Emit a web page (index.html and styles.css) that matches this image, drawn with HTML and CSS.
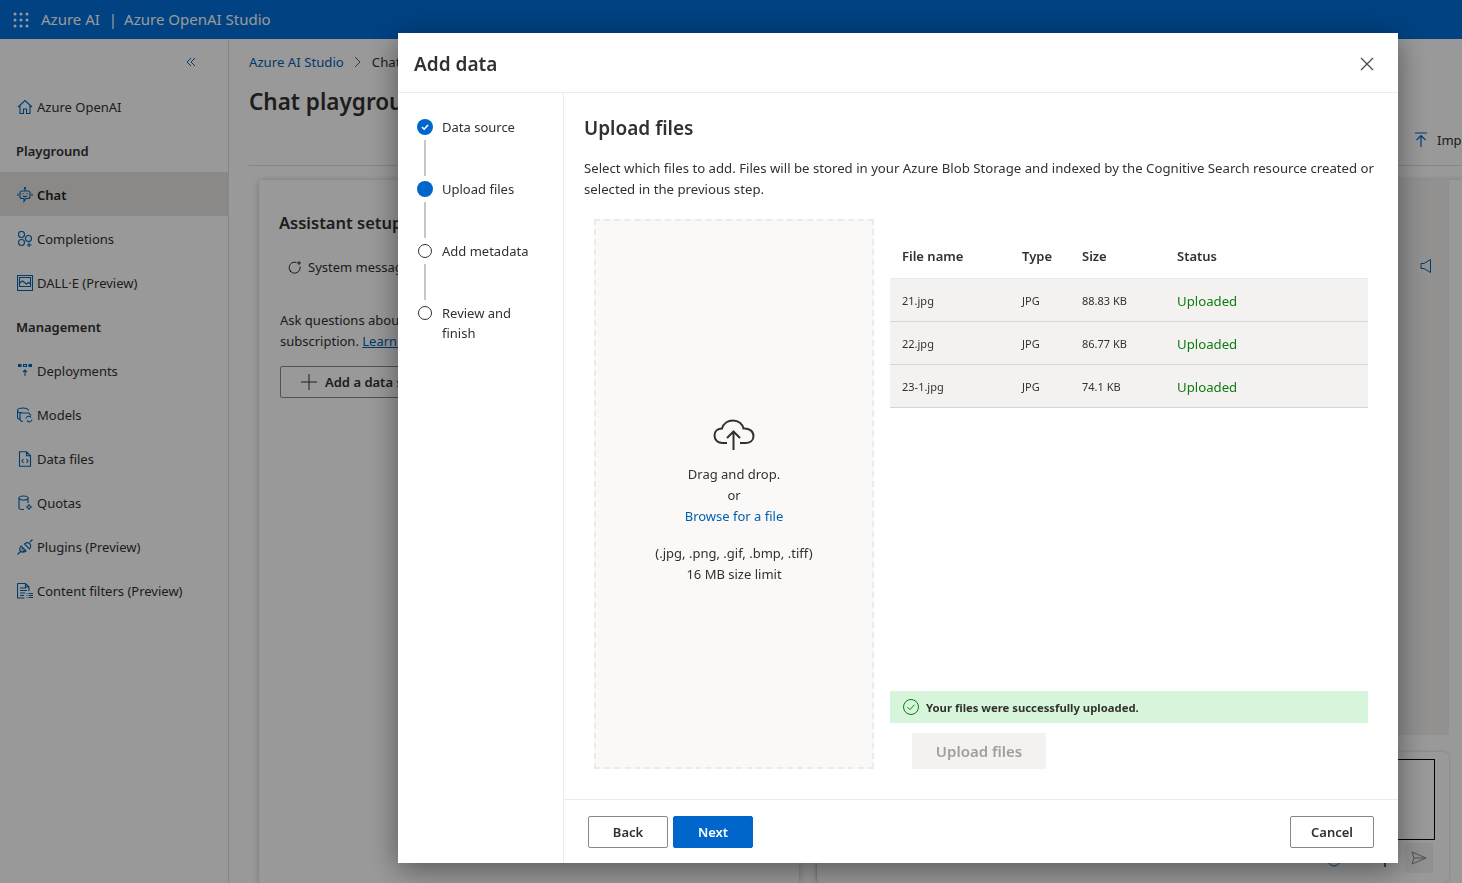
FILE: index.html
```html
<!DOCTYPE html>
<html lang="en">
<head>
<meta charset="utf-8">
<title>Azure OpenAI Studio</title>
<link rel="stylesheet" href="styles.css">
</head>
<body>
<header class="topbar">
  <svg class="waffle" width="18" height="18" viewBox="0 0 18 18" fill="currentColor"><circle cx="3" cy="3" r="1.500"/><circle cx="9" cy="3" r="1.500"/><circle cx="15" cy="3" r="1.500"/><circle cx="3" cy="9" r="1.500"/><circle cx="9" cy="9" r="1.500"/><circle cx="15" cy="9" r="1.500"/><circle cx="3" cy="15" r="1.500"/><circle cx="9" cy="15" r="1.500"/><circle cx="15" cy="15" r="1.500"/></svg>
  <span>Azure AI</span><span class="bar-sep">|</span><span>Azure OpenAI Studio</span>
</header>

<div class="shell">
  <nav class="sidebar">
    <div class="collapse">
      <svg width="10" height="10" viewBox="0 0 10 10" fill="none" stroke="currentColor"><path d="M5 1 1 5l4 4M9 1 5 5l4 4"/></svg>
    </div>
    <a class="nav-item"><svg class="nav-icon" viewBox="0 0 16 16"><path d="M1 8 8 1.500 15 8M3 6.500V14.500H6.500V10H9.500V14.500H13V6.500"/></svg>Azure OpenAI</a>
    <div class="nav-head">Playground</div>
    <a class="nav-item active"><svg class="nav-icon" viewBox="0 0 16 16"><circle cx="8" cy="1" r=".6"/><path d="M8 1.500V4M5 4h6a2 2 0 0 1 2 2v3.500a2 2 0 0 1-2 2H9l-2 3v-3H5a2 2 0 0 1-2-2V6a2 2 0 0 1 2-2zM1 6.500v2.500M15 6.500v2.500M6 9q2 1.200 4 0M6 6.300v1M10 6.300v1"/></svg>Chat</a>
    <a class="nav-item"><svg class="nav-icon" viewBox="0 0 16 16"><circle cx="4.500" cy="3.500" r="3"/><circle cx="4.500" cy="11.500" r="3"/><circle cx="11.500" cy="7.500" r="3"/><path d="M12 11.500v4.500M10 14h4.500"/></svg>Completions</a>
    <a class="nav-item"><svg class="nav-icon" viewBox="0 0 16 16"><path d="M.5 .5h15v15H.5zM2.500 2.500h11v9h-11zM2.500 8l3-2 4 3 2-1.500 2 1.500"/></svg>DALL·E (Preview)</a>
    <div class="nav-head">Management</div>
    <a class="nav-item"><svg class="nav-icon" viewBox="0 0 16 16"><path class="solid" d="M1 1h3.500v3H1zM11.500 1H15v3h-3.500z"/><path d="M6.500 1.500h3v2h-3zM8 13V7M6 9l2-2 2 2"/></svg>Deployments</a>
    <a class="nav-item"><svg class="nav-icon" viewBox="0 0 16 16"><path d="M.5 3.500v7c0 1 1 1.500 2.500 1.800M.5 3.500C.5 2 3 1 6 1s5 .8 5.500 2.500M.5 3.500C.5 5 3 6 6 6M3 5.500V12c0 1.500 1.500 2.500 3 2.500M3 5.500 6 6h6l2 2.500"/><path d="M9 11.500a2.700 2.700 0 0 1 5-1M15 12.500a2.700 2.700 0 0 1-5 1"/></svg>Models</a>
    <a class="nav-item"><svg class="nav-icon" viewBox="0 0 16 16"><path d="M2.500.8h7l4 4v10.500h-11zM9.500.8v4h4M6.500 8 5 10l1.500 2M9.500 8 11 10l-1.500 2"/></svg>Data files</a>
    <a class="nav-item"><svg class="nav-icon" viewBox="0 0 16 16"><ellipse cx="6.500" cy="3" rx="4.500" ry="2"/><path d="M2 3v10c0 1 2 1.500 5 1.500M11 3v5"/><circle cx="12" cy="12" r="1.500"/><path d="M12 9v1.200M12 13.800V15M9 12h1.200M13.800 12H15"/></svg>Quotas</a>
    <a class="nav-item"><svg class="nav-icon" viewBox="0 0 16 16"><path d="M.5 15.500 4 12M4 7l5 5c-2 1.500-4 1.500-5.500 0S2.500 9 4 7zM7.500 5l5 5c1.500-2 1.500-4 0-5.500S9.500 3.500 7.500 5zM13 3l2.500-2.500M6 9l-1.500 1.500M7.500 11 6 12.500"/></svg>Plugins (Preview)</a>
    <a class="nav-item"><svg class="nav-icon" viewBox="0 0 16 16"><path d="M.5.500h8l3.500 3.500v4M8.500.500V4H12M.5.500v14.500h7M3 5h6M3 7.500h7M3 10h5M3 12.500h4M9.500 10.500h.8M11.500 10.500h4.500M9.500 12.500h.8M11.500 12.500h4.500M9.500 14.500h.8M11.500 14.500h4.500"/></svg>Content filters (Preview)</a>
  </nav>

  <main class="content">
    <div class="crumbs"><a>Azure AI Studio</a><svg width="8" height="12" viewBox="0 0 8 12" fill="none" stroke="currentColor"><path d="m1 1 5 5-5 5"/></svg><span>Chat</span></div>
    <div class="title-row">
      <h1>Chat playground</h1>
      <div class="import"><svg width="14" height="16" viewBox="0 0 14 16" fill="none" stroke="#0066cc" stroke-width="1.200"><path d="M1 1h12M7 15V4M2.500 8 7 3.500 11.500 8"/></svg>Import</div>
    </div>
    <div class="panels">
      <section class="card setup">
        <h2>Assistant setup</h2>
        <div class="tab"><svg width="16" height="16" viewBox="0 0 16 16" fill="none" stroke="currentColor"><path d="M13 6.500a5.500 5.500 0 1 1-3.500-4M3.500 12v-2M12 1v4M10 3h4"/></svg>System message</div>
        <p>Ask questions about your data from your<br>subscription. <a>Learn more</a></p>
        <div class="add-btn"><svg width="18" height="18" viewBox="0 0 18 18" stroke="currentColor"><path d="M9 1v16M1 9h16"/></svg>Add a data source</div>
      </section>
      <section class="chat">
        <div class="chat-top"><svg width="12" height="16" viewBox="0 0 12 16" fill="none" stroke="#0067b8"><path d="M1 5.500h3l6.500-4v13l-6.500-4H1z"/></svg></div>
        <div class="chat-bottom">
          <div class="chat-input"></div>
          <div class="chat-actions">
            <svg class="act-a" width="14" height="14" viewBox="0 0 14 14" fill="none" stroke="#0067b8"><circle cx="7" cy="7" r="6"/></svg>
            <svg class="act-b" width="14" height="14" viewBox="0 0 14 14" fill="none" stroke="#323130" stroke-width="1.500"><circle cx="7" cy="5" r="4"/><path d="M7 9v5"/></svg>
            <div class="send"><svg width="16" height="14" viewBox="0 0 16 14" fill="none" stroke="currentColor"><path d="M1 1l14 6-14 6 2-6zM3 7h12"/></svg></div>
          </div>
        </div>
      </section>
    </div>
  </main>
</div>

<div class="scrim"></div>

<div class="dialog">
  <div class="dialog-head">
    <h2>Add data</h2>
    <svg width="14" height="14" viewBox="0 0 14 14" stroke="#444" stroke-width="1.200"><path d="m1 1 12 12M13 1 1 13"/></svg>
  </div>
  <div class="dialog-body">
    <ol class="steps">
      <li class="step done"><span class="dot"><svg width="10" height="10" viewBox="0 0 10 10" fill="none" stroke="#fff" stroke-width="1.600"><path d="m2 5 2.200 2.200L8 3"/></svg></span>Data source</li>
      <li class="step current"><span class="dot"></span>Upload files</li>
      <li class="step"><span class="dot"></span>Add metadata</li>
      <li class="step last"><span class="dot"></span>Review and<br>finish</li>
    </ol>
    <div class="pane">
      <div class="pane-main">
        <h3>Upload files</h3>
        <p class="lead">Select which files to add. Files will be stored in your Azure Blob Storage and indexed by the Cognitive Search resource created or selected in the previous step.</p>
        <div class="upload">
          <div class="drop">
            <svg class="cloud" width="42" height="32" viewBox="0 0 42 32" fill="none" stroke="#323130" stroke-width="2"><path d="M14 24H9.500C5 24 1.500 21 1.500 16.500S5 9.500 9 9.500C10.500 4.500 15 1.500 20 1.500c5.500 0 9.500 3.500 10.500 8 5 -.5 10 2.500 10 7.500 0 4.500-3.500 7-8 7H27"/><path d="M20.500 31V13M14 19l6.500-6.500L27 19"/></svg>
            <div>Drag and drop.</div>
            <div>or</div>
            <a>Browse for a file</a>
            <div class="types">(.jpg, .png, .gif, .bmp, .tiff)</div>
            <div>16 MB size limit</div>
          </div>
          <div class="files">
            <div class="file-table">
              <div class="file-row file-head"><span>File name</span><span>Type</span><span>Size</span><span>Status</span></div>
              <div class="file-row"><span>21.jpg</span><span>JPG</span><span>88.83 KB</span><span class="ok">Uploaded</span></div>
              <div class="file-row"><span>22.jpg</span><span>JPG</span><span>86.77 KB</span><span class="ok">Uploaded</span></div>
              <div class="file-row"><span>23-1.jpg</span><span>JPG</span><span>74.1 KB</span><span class="ok">Uploaded</span></div>
            </div>
            <div class="notice"><svg width="18" height="18" viewBox="0 0 18 18" fill="none" stroke="#107c10"><circle cx="9" cy="9" r="7.500"/><path d="m5.500 9.300 2.400 2.400 4.600-5"/></svg>Your files were successfully uploaded.</div>
            <div class="upload-btn">Upload files</div>
          </div>
        </div>
      </div>
      <div class="dialog-foot">
        <button class="btn">Back</button>
        <button class="btn primary">Next</button>
        <button class="btn cancel">Cancel</button>
      </div>
    </div>
  </div>
</div>
</body>
</html>
```

FILE: styles.css
```css
html,body{margin:0;padding:0;height:100%;overflow:hidden;}
body{font:13px/21px "Noto Sans",Arial,sans-serif;color:#323130;background:#fff;}
h1,h2,h3,p,ol{margin:0;padding:0;}
ol{list-style:none;}
a{color:#005fb0;}

/* top bar */
.topbar{height:39px;background:#006ed9;color:#fff;display:flex;align-items:center;font-size:15px;padding-left:12px;box-sizing:border-box;}
.waffle{margin-right:11px;}
.bar-sep{margin:0 7px 0 9px;}

.shell{display:flex;height:844px;overflow:hidden;}

/* left nav */
.sidebar{width:228px;border-right:1px solid #e1dfdd;flex:none;}
.collapse{height:45px;display:flex;justify-content:flex-end;align-items:center;padding:1px 32px 0 0;box-sizing:border-box;color:#0067b8;}
.nav-item,.nav-head{height:44px;display:flex;align-items:center;padding:2px 0 0 16px;box-sizing:border-box;}
.nav-item{color:#323130;}
.nav-head{font-weight:600;}
.nav-item.active{background:#e6e4e1;font-weight:600;color:#201f1e;}
.nav-icon{width:16px;height:16px;margin:0 4px 0 1px;fill:none;stroke:#0067b8;stroke-width:1.100;flex:none;}
.nav-icon .solid{fill:#0067b8;stroke:none;}

/* page under the dialog */
.content{flex:1;min-width:0;padding:12px 0 0 20px;}
.crumbs{display:flex;align-items:center;gap:10px;height:22px;font-size:13.200px;}
.crumbs svg{color:#605e5c;}
.title-row{display:flex;justify-content:space-between;padding-top:13px;height:93px;border-bottom:1px solid #e1dfdd;box-sizing:border-box;margin-bottom:14px;}
h1{font-size:22.500px;line-height:32px;font-weight:600;}
.import{display:flex;align-items:center;gap:9px;height:30px;margin:39px -14px 0 0;width:62px;}
.import svg{flex:none;}
.panels{display:flex;gap:18px;padding-left:10px;height:703px;}
.card{background:#fff;box-shadow:0 1px 6px rgba(0,0,0,.25);border-radius:2px;}
.setup{width:540px;padding:30px 20px 0;box-sizing:border-box;}
.setup h2{font-size:16.500px;line-height:26px;font-weight:600;}
.tab{display:flex;align-items:center;gap:5px;margin:21px 0 0 8px;}
.setup p{margin:32px 0 0 1px;}
.setup p a{text-decoration:underline;}
.add-btn{display:flex;align-items:center;gap:7px;margin:14px 0 0 1px;height:32px;width:220px;padding-left:19px;box-sizing:border-box;border:1px solid #8a8886;border-radius:2px;font-weight:600;white-space:nowrap;}
.chat{flex:1;display:flex;flex-direction:column;background:#fff;box-shadow:0 1px 6px rgba(0,0,0,.25);}
.chat-top{height:555px;margin-right:13px;padding:78px 17px 0 0;background:#f3f2f1;text-align:right;box-sizing:border-box;}
.chat-bottom{margin:17px 13px 0 0;flex:1;padding-top:7px;border-radius:6px;box-shadow:0 0 3px rgba(0,0,0,.2);}
.chat-input{height:81px;border:1px solid #000;box-sizing:border-box;width:618px;}
.chat-actions{display:flex;align-items:center;justify-content:flex-end;margin:3px 16px 0 0;}
.act-a{margin-right:37px;margin-top:4px;}
.act-b{margin-right:13px;margin-top:4px;}
.send{width:28px;height:30px;background:#f3f2f1;display:flex;align-items:center;justify-content:center;color:#8a8886;}

.scrim{position:fixed;inset:0;background:rgba(0,0,0,.4);}

/* dialog */
.dialog{position:fixed;left:398px;top:33px;width:1000px;height:830px;background:#fff;box-shadow:0 6px 28px rgba(0,0,0,.45);display:flex;flex-direction:column;}
.dialog-head{height:60px;flex:none;display:flex;justify-content:space-between;align-items:center;padding:4px 24px 0 16px;box-sizing:border-box;border-bottom:1px solid #edebe9;}
.dialog-head h2{font-size:19px;font-weight:600;}
.dialog-head svg{margin-top:-1px;}
.dialog-body{flex:1;display:flex;min-height:0;}

/* wizard steps */
.steps{width:146px;flex:none;border-right:1px solid #edebe9;padding:24px 0 0 19px;}
.step{position:relative;padding-left:25px;height:62px;white-space:nowrap;}
.step.last{height:auto;line-height:20px;}
.step .dot{position:absolute;left:1px;top:3px;width:12px;height:12px;border:1px solid #323130;border-radius:50%;background:#fff;display:flex;align-items:center;justify-content:center;}
.step.done .dot,.step.current .dot{background:#0066cc;border:0;left:0;width:16px;height:16px;top:2px;}
.step::after{content:"";position:absolute;left:7px;top:23px;height:36px;width:2px;background:#c8c6c4;}
.step.last::after{display:none;}

/* right pane */
.pane{flex:1;display:flex;flex-direction:column;min-width:0;}
.pane-main{flex:1;padding:20px 20px 0 20px;min-height:0;}
h3{font-size:19px;line-height:30px;font-weight:600;}
.lead{margin-top:15px;font-size:13.200px;}
.upload{display:flex;gap:16px;margin:19px 0 0 10px;}
.drop{width:280px;height:550px;box-sizing:border-box;border:2px dashed #edebe9;background:#faf9f8;display:flex;flex-direction:column;align-items:center;justify-content:center;padding-top:16px;}
.cloud{margin-bottom:13px;}
.types{margin-top:16px;}
.files{width:478px;display:flex;flex-direction:column;}
.file-table{flex:1;}
.file-row{display:grid;grid-template-columns:120px 60px 95px 1fr;align-items:center;height:43px;padding-left:12px;background:#f3f2f1;border-bottom:1px solid #d8d6d4;box-sizing:border-box;font-size:11px;}
.file-head{height:60px;padding-top:16px;background:#fff;border-bottom:1px solid #edebe9;font-size:13px;font-weight:600;}
.ok{color:#107c10;font-size:13.200px;padding-top:3px;}
.notice{height:32px;background:#d6f5da;display:flex;align-items:center;gap:6px;padding-left:12px;font-size:11.300px;font-weight:700;flex:none;}
.upload-btn{height:36px;width:134px;margin:10px 0 0 22px;background:#f3f2f1;color:#a19f9d;font-size:15px;font-weight:600;display:flex;align-items:center;justify-content:center;flex:none;}
.dialog-foot{height:64px;flex:none;box-sizing:border-box;border-top:1px solid #edebe9;display:flex;align-items:center;gap:5px;padding:0 24px;}
.btn{width:80px;height:32px;background:#fff;border:1px solid #8a8886;border-radius:2px;font:600 13px "Noto Sans",Arial,sans-serif;color:#323130;}
.btn.primary{background:#0066cc;border-color:#0066cc;color:#fff;}
.btn.cancel{width:84px;margin-left:auto;}
```
